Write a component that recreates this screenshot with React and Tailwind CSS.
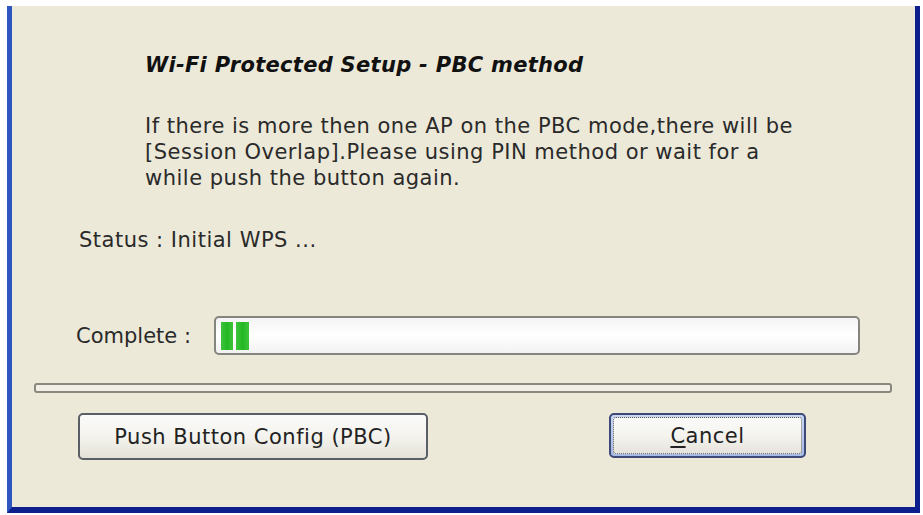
export default function App() {
  const font = { fontFamily: '"DejaVu Sans", Verdana, sans-serif' };
  return (
    <div className="w-[923px] h-[515px] bg-white pt-[6px] pl-[7px]" style={font}>
      <div className="w-[913px] h-[507px] bg-[#ece9d9] border-l-[5px] border-l-[#2f56c0] border-r-[5px] border-r-[#0c1f8c] border-b-[6px] border-b-[#0c1f8c] flex flex-col text-[21px] leading-[26px] tracking-[0.5px] text-[#222]">
        <div className="pl-[133px] mt-[46px] font-bold italic text-[#111] tracking-[0.3px]">
          Wi-Fi Protected Setup - PBC method
        </div>
        <div className="pl-[133px] mt-[35px] text-[#2a2a2a]">
          <div>If there is more then one AP on the PBC mode,there will be</div>
          <div>[Session Overlap].Please using PIN method or wait for a</div>
          <div>while push the button again.</div>
        </div>
        <div className="pl-[67px] mt-[36px] text-[#2a2a2a]">Status : Initial WPS ...</div>
        <div className="flex items-center mt-[63px] pl-[64px]">
          <span className="w-[138px] text-[#2a2a2a] tracking-[0px]">Complete :</span>
          <div className="w-[646px] h-[39px] rounded-[5px] border-2 border-[#85857f] bg-gradient-to-b from-[#f4f4f4] via-white to-[#f2f2f2] flex items-center pl-[5px] gap-[3px]">
            <div className="w-[12px] h-[28px] bg-gradient-to-r from-[#3cc43c] via-[#22b822] to-[#3cc43c]" />
            <div className="w-[13px] h-[28px] bg-gradient-to-r from-[#3cc43c] via-[#22b822] to-[#3cc43c]" />
          </div>
        </div>
        <div className="ml-[22px] mt-[28px] w-[858px] h-[10px] rounded-[3px] border-2 border-[#8a887c] bg-[#f1efe6]" />
        <div className="flex items-start mt-[20px]">
          <button className="ml-[66px] w-[350px] h-[47px] rounded-[5px] border-2 border-[#5a5e66] bg-gradient-to-b from-[#fbfbfa] via-[#f4f3ee] to-[#e4e2d8] text-[#222] text-[21px] leading-[26px] tracking-[0.5px]" style={font}>
            Push Button Config (PBC)
          </button>
          <button className="ml-[181px] w-[197px] h-[45px] rounded-[5px] border-2 border-[#3d4a78] bg-gradient-to-b from-[#c9d6f4] to-[#a7bbe6] p-[2px]" style={font}>
            <div className="w-full h-full rounded-[3px] bg-gradient-to-b from-[#fbfbfa] via-[#f4f3ee] to-[#e6e4dc] border border-dotted border-[#555] flex items-center justify-center text-[#222] text-[21px] leading-[26px]">
              <span><span className="underline underline-offset-[3px]">C</span>ancel</span>
            </div>
          </button>
        </div>
      </div>
    </div>
  );
}
